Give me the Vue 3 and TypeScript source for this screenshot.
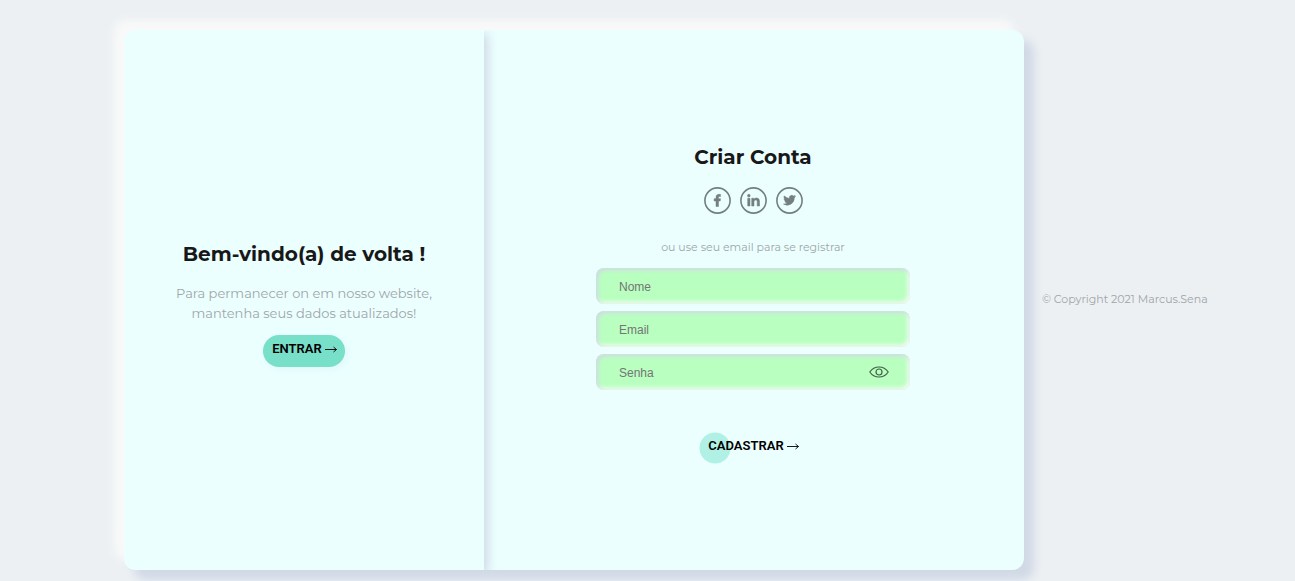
<script setup lang="ts">
import { ref } from 'vue'

const nome = ref('')
const email = ref('')
const senha = ref('')
const senhaVisivel = ref(false)
</script>

<template>
  <div class="page">
    <main class="card">
      <section class="panel welcome">
        <h2 class="title">Bem-vindo(a) de volta !</h2>
        <p class="description">Para permanecer on em nosso website,<br />mantenha seus dados atualizados!</p>
        <button class="cta cta-filled" type="button">
          <span>ENTRAR</span>
          <svg class="arrow" viewBox="0 0 12 8" aria-hidden="true"><path d="M0 4.500h11.500M8.500 2l3 2.500-3 2.500" /></svg>
        </button>
      </section>

      <section class="panel register">
        <form class="form" @submit.prevent>
          <h2 class="title">Criar Conta</h2>
          <nav class="socials" aria-label="Redes sociais">
            <a href="#facebook" aria-label="Facebook">
              <svg viewBox="0 0 27 27"><circle cx="13.5" cy="13.5" r="12.6" /><path d="M12 19.5V14h-1.900v-2.300H12V10.300c0-2 1.200-3 3-3 .8 0 1.400.1 1.500.1v2.100h-1c-.8 0-1 .4-1 1v1.200h2l-.3 2.300h-1.700v5.500z" /></svg>
            </a>
            <a href="#linkedin" aria-label="LinkedIn">
              <svg viewBox="0 0 27 27"><circle cx="13.5" cy="13.5" r="12.6" /><path d="M7.700 11.200h2.300V19H7.700zM8.850 7.300a1.350 1.350 0 1 1 0 2.700 1.350 1.350 0 0 1 0-2.700zM11.700 11.200h2.200v1.100c.4-.7 1.200-1.300 2.500-1.300 2.600 0 3.100 1.600 3.100 3.800V19h-2.300v-3.800c0-1 0-2.200-1.400-2.200S14 14.100 14 15.200V19h-2.300z" /></svg>
            </a>
            <a href="#twitter" aria-label="Twitter">
              <svg viewBox="0 0 27 27"><circle cx="13.5" cy="13.5" r="12.6" /><path d="M19.500 9.500c-.4.2-.9.300-1.400.4.5-.3.900-.8 1.100-1.400-.5.3-1 .5-1.600.6a2.460 2.460 0 0 0-4.200 2.300c-2-.1-3.900-1.100-5.100-2.600-.7 1.200-.3 2.600.8 3.300-.4 0-.8-.1-1.100-.3 0 1.200.8 2.200 2 2.500-.4.100-.7.100-1.100 0 .3 1 1.200 1.700 2.300 1.700A5 5 0 0 1 7.500 17a7 7 0 0 0 10.800-6.200c.5-.3.900-.8 1.200-1.300z" /></svg>
            </a>
          </nav>
          <p class="hint">ou use seu email para se registrar</p>
          <div class="fields">
            <input v-model="nome" class="field" type="text" placeholder="Nome" aria-label="Nome" />
            <input v-model="email" class="field" type="email" placeholder="Email" aria-label="Email" />
            <div class="password">
              <input v-model="senha" class="field" :type="senhaVisivel ? 'text' : 'password'" placeholder="Senha" aria-label="Senha" />
              <button class="eye" type="button" aria-label="Mostrar senha" @click="senhaVisivel = !senhaVisivel">
                <svg viewBox="0 0 20 12"><path d="M.8 6C3 2.700 6.200 1 10 1s7 1.700 9.200 5C17 9.300 13.800 11 10 11S3 9.300.8 6z" /><circle cx="10" cy="6" r="3" /></svg>
              </button>
            </div>
          </div>
          <button class="cta cta-circle" type="submit">
            <span>CADASTRAR</span>
            <svg class="arrow" viewBox="0 0 12 8" aria-hidden="true"><path d="M0 4.500h11.500M8.500 2l3 2.500-3 2.500" /></svg>
          </button>
        </form>
      </section>
    </main>
    <footer class="footer">© Copyright 2021 Marcus.Sena</footer>
  </div>
</template>

<style>
body {
  margin: 0;
  background: #ecf0f3;
}
</style>

<style scoped>
.page {
  box-sizing: border-box;
  min-height: 100vh;
  padding: 30px 0 11px;
  display: flex;
  justify-content: center;
  align-items: center;
  overflow: hidden;
  font-family: Montserrat, Inter, sans-serif;
  color: #a0a5a8;
}
.card {
  flex: 0 1 900px;
  min-height: 540px;
  display: grid;
  grid-template-columns: 2fr 3fr;
  border-radius: 12px;
  overflow: hidden;
  background: #ebffff;
  box-shadow: 10px 10px 10px #d1d9e6, -10px -10px 10px #f9f9f9;
}
.panel {
  display: flex;
  flex-direction: column;
  align-items: center;
  justify-content: center;
  padding-top: 8px;
}
.register {
  padding-right: 2px;
}
.welcome {
  position: relative;
  z-index: 1;
  background: #ebffff;
  box-shadow: 4px 4px 10px #d1d9e6;
}
.title {
  margin: 0;
  font-size: 20px;
  line-height: 24px;
  font-weight: 700;
  color: #181818;
}
.description {
  margin: 17px 0 12px;
  font-size: 13px;
  line-height: 20px;
  text-align: center;
}
.form {
  width: 314px;
  max-width: 100%;
  display: flex;
  flex-direction: column;
  align-items: center;
}
.socials {
  display: flex;
  gap: 9px;
  margin-top: 18px;
}
.socials a,
.socials svg {
  display: block;
  width: 27px;
  height: 27px;
}
.socials path {
  fill: #737f80;
  stroke: #737f80;
  stroke-width: 0.5;
}
.socials circle {
  fill: none;
  stroke: #737f80;
  stroke-width: 1.6;
}
.hint {
  margin: 26px 0 14px;
  font-size: 11px;
  line-height: 14px;
}
.fields {
  width: 100%;
  display: grid;
  gap: 7px;
}
.field {
  box-sizing: border-box;
  display: block;
  width: 100%;
  height: 36px;
  padding: 2px 23px 0;
  border: 0;
  border-radius: 8px;
  outline: none;
  background: #b9ffc0;
  font-family: "Liberation Sans", Arial, sans-serif;
  font-size: 12px;
  color: #333;
  box-shadow: inset 2px 2px 4px #d1d9e6, inset -2px -2px 4px #f9f9f9;
}
.field::placeholder {
  color: #757575;
}
.password {
  position: relative;
}
.eye {
  position: absolute;
  top: 0;
  right: 21px;
  height: 36px;
  display: flex;
  align-items: center;
  padding: 0;
  border: 0;
  background: none;
  cursor: pointer;
}
.eye svg {
  width: 20px;
  height: 12px;
  fill: none;
  stroke: #436049;
  stroke-width: 1.2;
}
.cta {
  height: 32px;
  display: flex;
  align-items: center;
  gap: 3px;
  padding: 0 8px 4px 9px;
  border: 0;
  border-radius: 16px;
  background: none;
  font-family: Roboto, sans-serif;
  font-size: 13px;
  font-weight: 600;
  color: #000;
  cursor: pointer;
}
.cta-filled {
  background: #78dfc9;
  box-shadow: 2px 2px 8px #dff8f8;
}
.cta-circle {
  margin-top: 42px;
  background: radial-gradient(circle at 16px 16px, #b1f1e5 15px, transparent 16px);
}
.arrow {
  width: 12px;
  height: 8px;
  fill: none;
  stroke: #000;
  stroke-width: 0.9;
}
.footer {
  width: 147px;
  box-sizing: border-box;
  padding: 0 0 2px 18px;
  font-size: 11px;
  line-height: 14px;
  white-space: nowrap;
}
</style>
